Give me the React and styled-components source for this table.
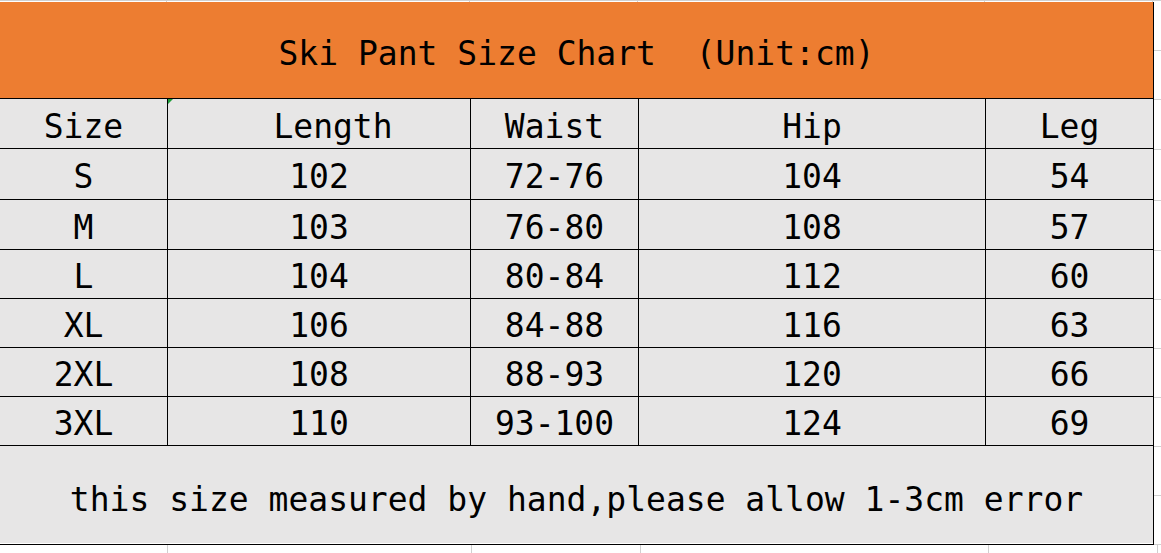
import React from 'react'
import { styled, createGlobalStyle } from 'styled-components'

const GlobalStyle = createGlobalStyle`
  html, body {
    margin: 0;
    padding: 0;
    background: #ffffff;
  }
  body {
    font-family: "DejaVu Sans Mono", "Liberation Mono", monospace;
    color: #000;
  }
`

const COLS = [167, 302, 167, 346, 167]
const ROW_HEIGHTS = [49, 50, 49, 48, 48, 48, 48]

const Page = styled.div`
  width: 1161px;
  height: 553px;
  overflow: hidden;
  display: flex;
  flex-direction: column;
  background: #fff;
`

const TopStrip = styled.div`
  height: 1px;
  border-top: 1px solid #d0d0d0;
  display: flex;
`

const StripCell = styled.div`
  width: ${p => p.$w}px;
  flex-shrink: 0;
  border-right: 1px solid #d0d0d0;
`

const Main = styled.div`
  display: flex;
`

const Sheet = styled.div`
  width: 1153px;
  border-right: 1px solid #000;
  border-bottom: 1px solid #000;
  display: flex;
  flex-direction: column;
`

const Title = styled.div`
  height: 97px;
  background: #ed7d31;
  border-bottom: 1px solid #000;
  display: flex;
  align-items: center;
  justify-content: center;
  padding-top: 7px;
  box-sizing: border-box;
  font-size: 33px;
  white-space: pre;
`

const Grid = styled.div`
  display: grid;
  grid-template-columns: ${COLS.map(c => c + 'px').join(' ')};
  grid-template-rows: ${ROW_HEIGHTS.map(h => h + 'px').join(' ')} 97px;
  gap: 1px;
  background: #000;
`

const Cell = styled.div`
  background: #e7e6e6;
  display: flex;
  align-items: center;
  justify-content: center;
  font-size: 33px;
  position: relative;
  padding-left: ${p => p.$shift || 0}px;
  padding-top: 5px;
  box-sizing: border-box;
`

const Flag = styled.span`
  position: absolute;
  left: 0;
  top: 0;
  width: 0;
  height: 0;
  border-top: 5px solid #1e9e3a;
  border-right: 5px solid transparent;
`

const Note = styled(Cell)`
  grid-column: 1 / -1;
  white-space: pre;
  padding-top: 9px;
`

const Gutter = styled.div`
  flex: 1;
  display: flex;
  flex-direction: column;
`

const GutterCell = styled.div`
  height: ${p => p.$h}px;
  flex-shrink: 0;
  border-bottom: 1px solid #d0d0d0;
`

const BottomStrip = styled.div`
  flex: 1;
  display: flex;
`

const headers = ['Size', 'Length', 'Waist', 'Hip', 'Leg']
const rows = [
  ['S', '102', '72-76', '104', '54'],
  ['M', '103', '76-80', '108', '57'],
  ['L', '104', '80-84', '112', '60'],
  ['XL', '106', '84-88', '116', '63'],
  ['2XL', '108', '88-93', '120', '66'],
  ['3XL', '110', '93-100', '124', '69'],
]

const gutterRows = [48, 48, ...ROW_HEIGHTS, 48, 48]

export default function App() {
  return (
    <Page>
      <GlobalStyle />
      <TopStrip>
        {COLS.map((w, i) => <StripCell key={i} $w={i === 0 ? w - 1 : w} />)}
      </TopStrip>
      <Main>
        <Sheet>
          <Title>Ski Pant Size Chart  (Unit:cm)</Title>
          <Grid>
            {headers.map((h, i) => (
              <Cell key={h} $shift={i === 1 ? 28 : 0}>
                {i === 1 && <Flag />}
                {h}
              </Cell>
            ))}
            {rows.map(r => r.map((v, i) => <Cell key={r[0] + i}>{v}</Cell>))}
            <Note>this size measured by hand,please allow 1-3cm error</Note>
          </Grid>
        </Sheet>
        <Gutter>
          {gutterRows.map((h, i) => <GutterCell key={i} $h={h} />)}
        </Gutter>
      </Main>
      <BottomStrip>
        {COLS.map((w, i) => <StripCell key={i} $w={i === 0 ? w : w + 1} />)}
      </BottomStrip>
    </Page>
  )
}
